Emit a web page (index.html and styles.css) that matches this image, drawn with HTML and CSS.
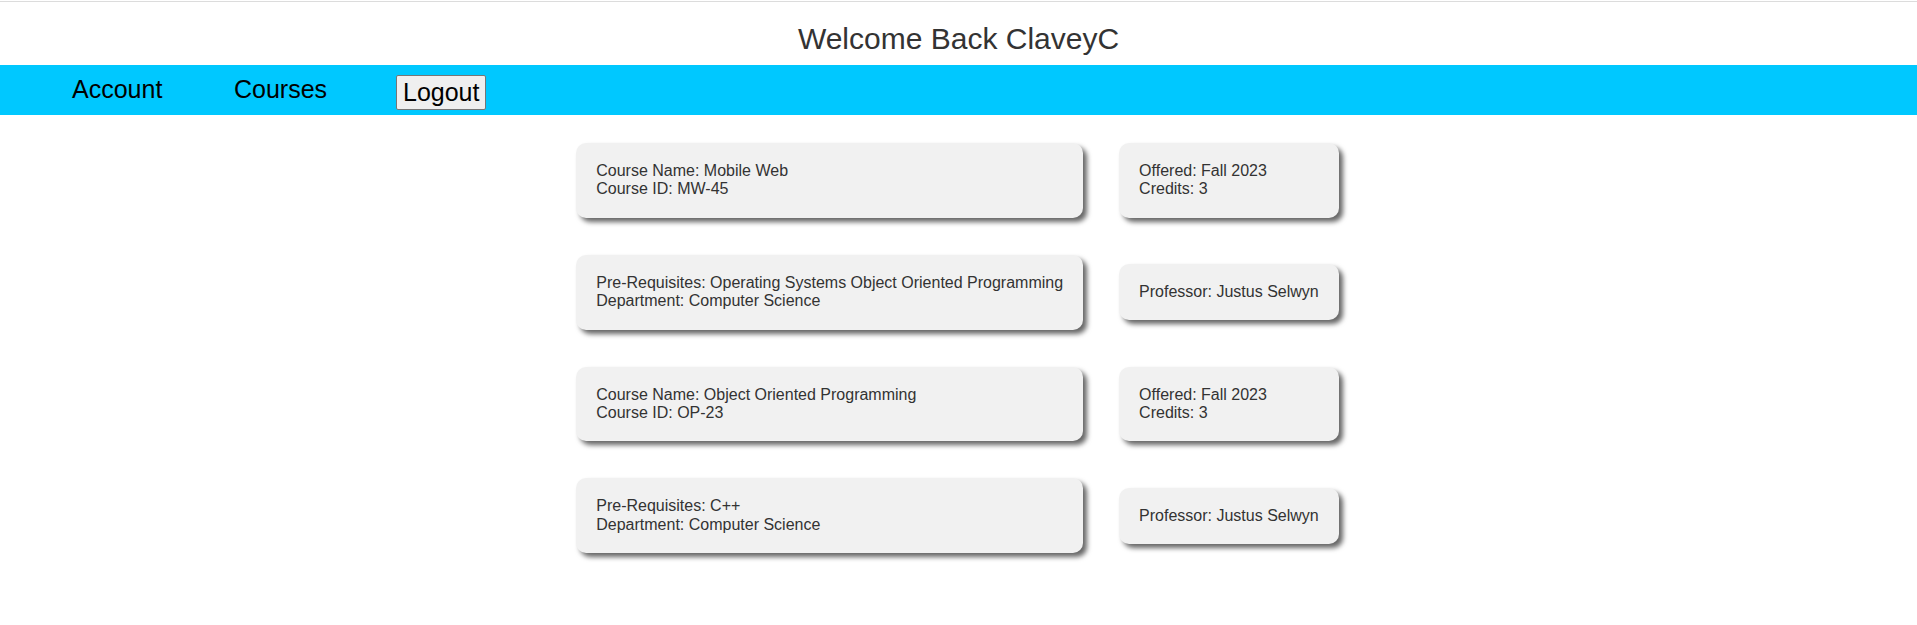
FILE: index.html
```html
<!DOCTYPE html>
<html lang="en">
<head>
<meta charset="utf-8">
<title>Courses</title>
<link rel="stylesheet" href="styles.css">
</head>
<body>
  <div class="topline"></div>
  <h1 class="title">Welcome Back ClaveyC</h1>
  <nav class="nav">
    <div class="nav-item">Account</div>
    <div class="nav-item">Courses</div>
    <div class="nav-item"><button class="logout" type="button">Logout</button></div>
  </nav>
  <main class="courses">
    <div class="card"><div>Course Name: Mobile Web</div><div>Course ID: MW-45</div></div>
    <div class="card"><div>Offered: Fall 2023</div><div>Credits: 3</div></div>

    <div class="card"><div>Pre-Requisites: Operating Systems Object Oriented Programming</div><div>Department: Computer Science</div></div>
    <div class="card"><div>Professor: Justus Selwyn</div></div>

    <div class="card"><div>Course Name: Object Oriented Programming</div><div>Course ID: OP-23</div></div>
    <div class="card"><div>Offered: Fall 2023</div><div>Credits: 3</div></div>

    <div class="card"><div>Pre-Requisites: C++</div><div>Department: Computer Science</div></div>
    <div class="card"><div>Professor: Justus Selwyn</div></div>
  </main>
</body>
</html>
```

FILE: styles.css
```css
html, body {
  margin: 0;
  padding: 0;
  background: #ffffff;
}

body {
  font-family: "Liberation Sans", Arial, sans-serif;
  color: #333333;
  padding-top: 1px;
}

.topline {
  height: 1px;
  background: #dcdcdc;
}

.title {
  margin: 20px 0 9px;
  font-size: 30px;
  line-height: 34px;
  font-weight: normal;
  text-align: center;
  color: #333333;
}

.nav {
  display: flex;
  align-items: flex-start;
  height: 50px;
  box-sizing: border-box;
  padding: 10px 0 0 72px;
  background: #00c8ff;
}

.nav-item {
  width: 162px;
  font-size: 25px;
  line-height: 28px;
  color: #000000;
}

.logout {
  font-family: "Liberation Sans", Arial, sans-serif;
  font-size: 25px;
  line-height: 29px;
  padding: 2px 6px;
  margin: 0;
  color: #000000;
  background: #efefef;
  border: 1px solid #767676;
  border-radius: 2px;
}

.courses {
  display: grid;
  grid-template-columns: auto auto;
  justify-content: center;
  align-items: center;
  column-gap: 36px;
  row-gap: 37px;
  padding: 28px 0 40px;
  margin-left: -2px;
}

.card {
  background: #f1f1f1;
  border-radius: 10px;
  padding: 19px 20px;
  font-size: 16px;
  line-height: 18.4px;
  color: #333333;
  box-shadow: 4px 4px 5px rgba(0, 0, 0, 0.6);
}
```
